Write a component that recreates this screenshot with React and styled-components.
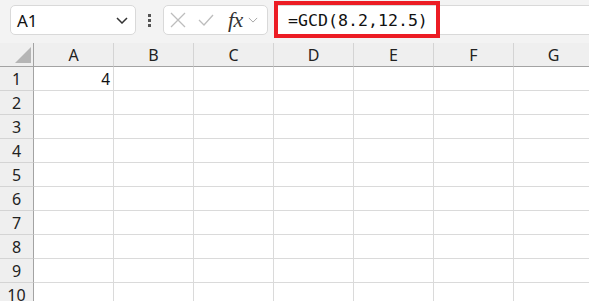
import React from 'react';
import styled, { createGlobalStyle } from 'styled-components';

const GlobalStyle = createGlobalStyle`
  html, body {
    margin: 0;
    padding: 0;
    background: #ffffff;
    overflow: hidden;
  }
  body {
    font-family: "Noto Sans", "Open Sans", sans-serif;
    color: #222;
  }
`;

const Page = styled.div`
  position: relative;
  width: 589px;
  height: 301px;
  overflow: hidden;
  background: #f3f3f3;
`;

const Toolbar = styled.div`
  display: flex;
  align-items: flex-start;
  height: 43px;
  padding: 5px 0 0 10px;
  box-sizing: border-box;
`;

const Box = styled.div`
  display: flex;
  align-items: center;
  box-sizing: border-box;
  height: 30px;
  width: ${p => p.$width}px;
  background: #fff;
  border: 1px solid #d9d9d9;
  border-radius: 5px;
`;

const NameText = styled.span`
  flex: 1;
  padding-left: 6px;
  font-size: 17px;
  color: #111;
`;

const Dots = styled.div`
  width: 27px;
  height: 30px;
  display: flex;
  flex-direction: column;
  align-items: center;
  justify-content: center;
  gap: 2px;
  & span {
    width: 3px;
    height: 3px;
    background: #555;
  }
`;

const FxLabel = styled.span`
  font-family: "Liberation Serif", "DejaVu Serif", serif;
  font-style: italic;
  font-size: 22px;
  color: #333;
  margin-left: 14px;
  letter-spacing: -0.5px;
`;

const Formula = styled.div`
  flex: 1;
  margin-left: 6px;
  height: 30px;
  box-sizing: border-box;
  background: #fff;
  border: 1px solid #d9d9d9;
  border-right: none;
  display: flex;
  align-items: center;
  padding-left: 13px;
  font-family: "DejaVu Sans Mono", "Liberation Mono", monospace;
  font-size: 16.6px;
  color: #111;
`;

const Highlight = styled.div`
  position: absolute;
  left: 274px;
  top: 1px;
  width: 166px;
  height: 37px;
  box-sizing: border-box;
  border: 4px solid #ec1c24;
  pointer-events: none;
`;

const Grid = styled.div`
  display: grid;
  grid-template-columns: 34px repeat(7, 80px);
  grid-auto-rows: 24px;
`;

const Cell = styled.div`
  box-sizing: border-box;
  background: #fff;
  border-right: 1px solid #dadada;
  border-bottom: 1px solid #dadada;
  display: flex;
  align-items: center;
  justify-content: flex-end;
  padding-right: 3px;
  font-size: 15.5px;
  color: #111;
`;

const ColHead = styled.div`
  box-sizing: border-box;
  background: #efefef;
  border-right: 1px solid #d4d4d4;
  border-bottom: 1px solid #a3a3a3;
  display: flex;
  align-items: center;
  justify-content: center;
  font-size: 16px;
  color: #222;
  padding-top: 1px;
`;

const Corner = styled(ColHead)`
  border-right: 1px solid #a3a3a3;
  justify-content: flex-end;
  align-items: flex-end;
  padding: 0 2px 3px 0;
`;

const RowHead = styled.div`
  box-sizing: border-box;
  background: #efefef;
  border-right: 1px solid #a3a3a3;
  border-bottom: 1px solid #d4d4d4;
  display: flex;
  align-items: center;
  justify-content: center;
  font-size: 16px;
  color: #222;
`;

const columns = ['A', 'B', 'C', 'D', 'E', 'F', 'G'];
const rows = [1, 2, 3, 4, 5, 6, 7, 8, 9, 10];

function Chevron({ size = 12, color = '#333', width = 1.5 }) {
  return (
    <svg width={size} height={size / 2 + 1} viewBox="0 0 12 7">
      <path d="M1 1 L6 6 L11 1" fill="none" stroke={color} strokeWidth={width} />
    </svg>
  );
}

export default function App() {
  return (
    <Page>
      <GlobalStyle />
      <Toolbar>
        <Box $width={126}>
          <NameText>A1</NameText>
          <span style={{ marginRight: 7, display: 'flex' }}>
            <Chevron size={12} />
          </span>
        </Box>
        <Dots>
          <span />
          <span />
          <span />
        </Dots>
        <Box $width={105}>
          <svg width="16" height="16" viewBox="0 0 16 16" style={{ marginLeft: 6 }}>
            <path d="M1 1 L15 15 M15 1 L1 15" stroke="#bdbdbd" strokeWidth="1.3" fill="none" />
          </svg>
          <svg width="16" height="12" viewBox="0 0 16 12" style={{ marginLeft: 12 }}>
            <path d="M1 6 L6 11 L15 1" stroke="#bdbdbd" strokeWidth="1.3" fill="none" />
          </svg>
          <FxLabel>fx</FxLabel>
          <span style={{ marginLeft: 5, display: 'flex' }}>
            <Chevron size={10} color="#a0a0a0" width={1.1} />
          </span>
        </Box>
        <Formula>=GCD(8.2,12.5)</Formula>
      </Toolbar>
      <Grid>
        <Corner>
          <svg width="16" height="16" viewBox="0 0 16 16">
            <path d="M16 0 L16 16 L0 16 Z" fill="#b5b5b5" />
          </svg>
        </Corner>
        {columns.map(c => (
          <ColHead key={c}>{c}</ColHead>
        ))}
        {rows.map(r => (
          <React.Fragment key={r}>
            <RowHead>{r}</RowHead>
            {columns.map(c => (
              <Cell key={c}>{r === 1 && c === 'A' ? 4 : ''}</Cell>
            ))}
          </React.Fragment>
        ))}
      </Grid>
      <Highlight />
    </Page>
  );
}
